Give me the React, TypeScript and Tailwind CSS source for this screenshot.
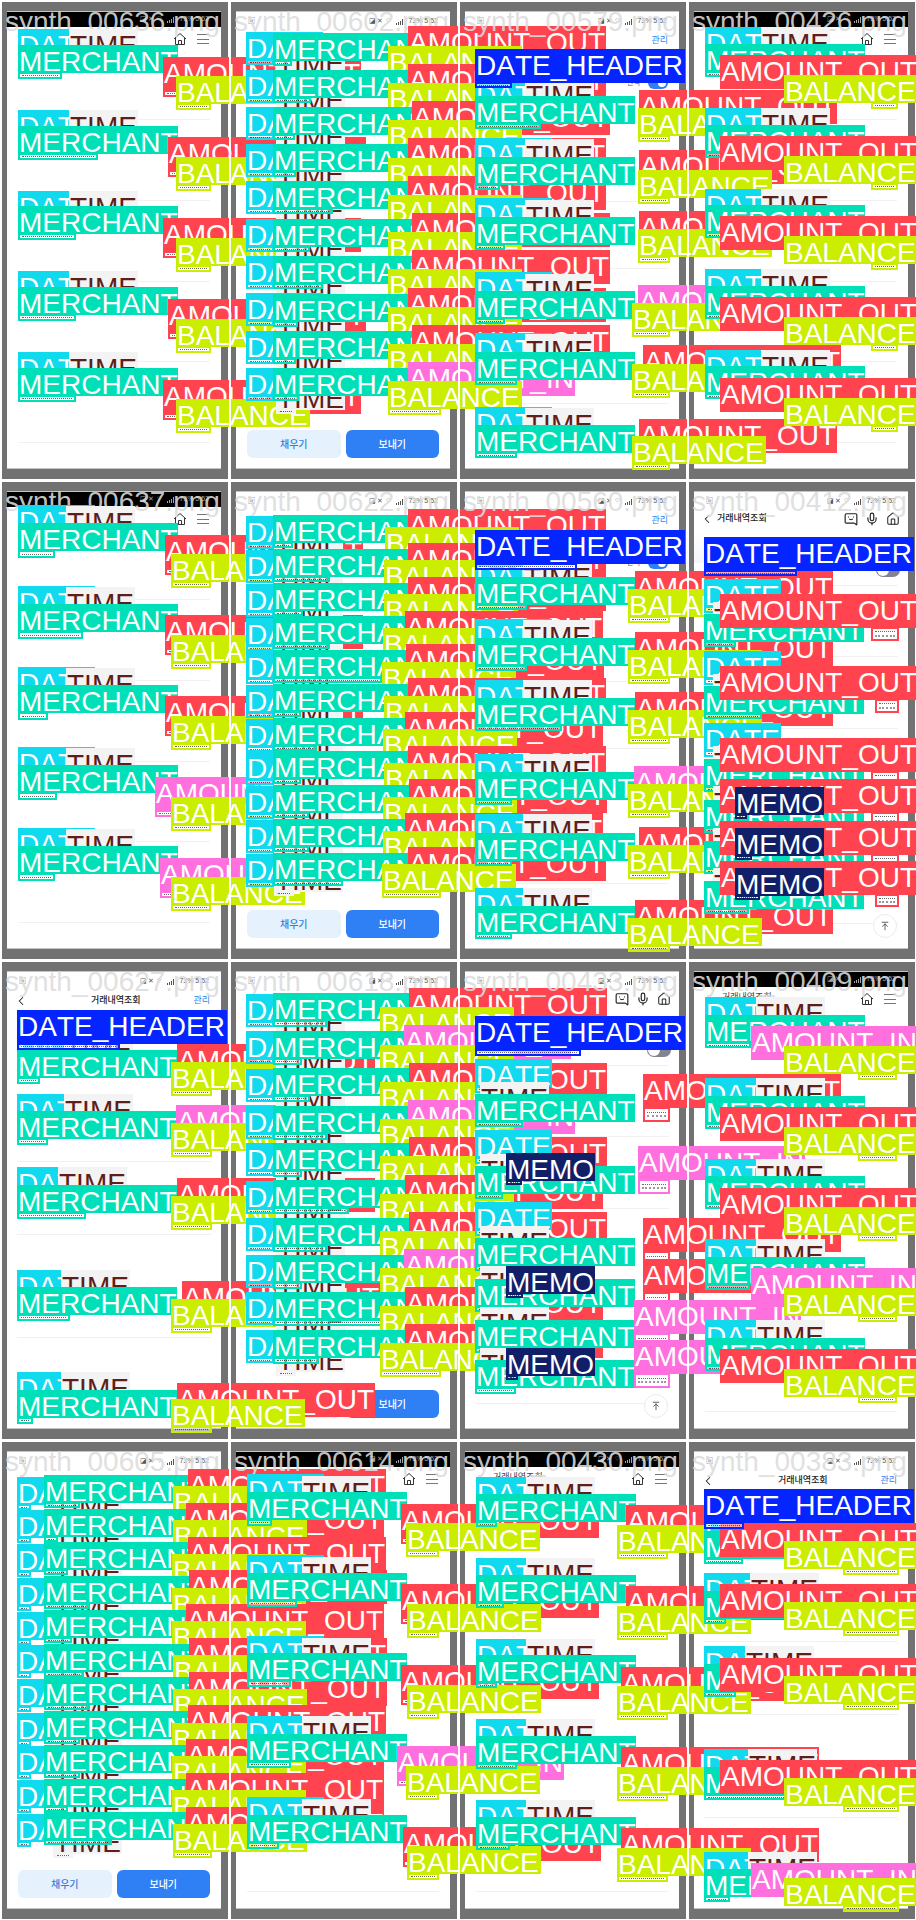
import React from "react";
import { ArrowUpToLine, ChevronLeft, House, Menu, MessageSquare, Mic } from "lucide-react";

type Kind = "D" | "T" | "M" | "O" | "I" | "B" | "E" | "H";

/** kind, label left, label top, then the outlined region: left, width, depth under the label */
type Mark = [Kind, number, number, number?, number?, number?];

const LABELS: Record<Kind, { text: string; tag: string; line: string }> = {
  D: { text: "DATE", tag: "w-[77px] h-7 bg-[#11d9ee] text-white", line: "border-[#11d9ee]" },
  T: { text: "TIME", tag: "w-[69px] h-7 bg-[#f3f3f3] text-[#5e1f1a]", line: "border-[#f3f3f3]" },
  M: { text: "MERCHANT", tag: "w-40 h-7 bg-[#00e0b8] text-white", line: "border-[#00e0b8]" },
  O: { text: "AMOUNT_OUT", tag: "w-[198px] h-[34px] bg-[#ff444f] text-white", line: "border-[#ff444f]" },
  I: { text: "AMOUNT_IN", tag: "w-[167px] h-[34px] bg-[#ff6fdd] text-white", line: "border-[#ff6fdd]" },
  B: { text: "BALANCE", tag: "w-[134px] h-7 bg-[#cbed00] text-white", line: "border-[#cbed00]" },
  E: { text: "MEMO", tag: "w-[89px] h-7 bg-[#111f68] text-white", line: "border-[#111f68]" },
  H: { text: "DATE_HEADER", tag: "w-[210px] h-[34px] bg-[#0425ff] text-white", line: "border-[#0425ff]" },
};

const TALL: Kind[] = ["O", "I", "H"];

/** A transaction row: date y, time y, merchant y + region width, amount kind/x/y, balance x/y */
type Row = [number, number, number, number, Kind, number, number, number, number];

interface RowFrame {
  date: number;
  time: number;
  merchant: number;
  right: number;
  dateW?: number;
  amountX?: number;
  depth: number;
}

function rows(f: RowFrame, list: Row[]): Mark[] {
  return list.flatMap(([dy, ty, my, mw, kind, ax, ay, bx, by]): Mark[] => {
    const balanceX = f.amountX ?? bx;
    const inset = f.merchant === 18 && f.amountX === undefined;
    return [
      ["D", f.date, dy, f.date, f.dateW ?? 28, 5],
      ["T", f.time, ty, f.time, 20, 4],
      ["M", f.merchant, my, f.merchant, mw, f.depth],
      inset && by - ay < 24 ? [kind, ax, ay, ax, f.right - ax, 6] : [kind, ax, ay],
      ["B", bx, by, balanceX, f.right - balanceX, 6],
    ];
  });
}

type ScreenKind = "menu" | "transfer" | "manage" | "search";

interface Sheet {
  name: string;
  screen: ScreenKind;
  title?: boolean;
  late?: boolean;
  marks: Mark[];
}

const sheets: Sheet[] = [
  {
    name: "synth_00636.png",
    screen: "menu",
    marks: rows({ date: 18, time: 69, merchant: 18, right: 211, depth: 6 }, [
      [29, 29, 45, 44, "O", 163, 57, 176, 76],
      [110, 110, 126, 80, "O", 168, 137, 176, 157],
      [191, 191, 206, 58, "O", 163, 218, 176, 238],
      [271, 271, 287, 58, "O", 168, 299, 176, 319],
      [352, 352, 368, 58, "O", 163, 380, 176, 399],
    ]),
  },
  {
    name: "synth_00602.png",
    screen: "transfer",
    marks: rows({ date: 17, time: 47, merchant: 44, right: 212, depth: 5 }, [
      [32, 47, 33, 19, "O", 179, 26, 159, 46],
      [70, 84, 70, 38, "O", 179, 64, 159, 83],
      [107, 121, 107, 22, "O", 183, 101, 159, 120],
      [144, 158, 144, 23, "O", 179, 138, 159, 158],
      [181, 195, 181, 60, "O", 179, 176, 159, 195],
      [219, 233, 219, 37, "O", 183, 213, 159, 232],
      [256, 270, 256, 50, "O", 183, 250, 159, 269],
      [293, 308, 294, 25, "O", 179, 288, 159, 307],
      [331, 345, 331, 23, "O", 183, 325, 159, 344],
      [368, 382, 368, 26, "I", 179, 362, 159, 381],
    ]),
  },
  {
    name: "synth_00579.png",
    screen: "manage",
    marks: [
      ...rows({ date: 17, time: 67, merchant: 17, right: 212, dateW: 77, depth: 5 }, [
        [79, 79, 96, 66, "O", 181, 90, 180, 108],
        [138, 139, 157, 25, "O", 181, 150, 180, 170],
        [198, 200, 217, 30, "O", 181, 211, 180, 229],
        [272, 274, 291, 30, "I", 180, 285, 174, 303],
        [333, 334, 352, 42, "O", 185, 345, 174, 364],
        [407, 408, 425, 42, "O", 181, 419, 174, 436],
      ]),
      ["H", 17, 49, 17, 37, 5],
    ],
  },
  {
    name: "synth_00426.png",
    screen: "menu",
    marks: rows({ date: 18, time: 74, merchant: 18, right: 211, amountX: 184, depth: 5 }, [
      [27, 27, 44, 44, "O", 33, 55, 97, 75],
      [108, 108, 125, 44, "O", 33, 136, 97, 156],
      [189, 189, 205, 44, "O", 33, 216, 97, 236],
      [269, 269, 286, 44, "O", 33, 297, 97, 317],
      [350, 350, 366, 44, "O", 33, 378, 97, 398],
    ]),
  },
  {
    name: "synth_00637.png",
    screen: "menu",
    marks: rows({ date: 18, time: 66, merchant: 18, right: 211, dateW: 77, depth: 7 }, [
      [25, 26, 43, 37, "O", 165, 55, 171, 74],
      [106, 107, 124, 65, "O", 165, 135, 171, 155],
      [187, 188, 205, 30, "O", 165, 216, 171, 236],
      [267, 268, 285, 39, "I", 155, 297, 171, 317],
      [348, 349, 366, 37, "I", 160, 378, 171, 397],
    ]),
  },
  {
    name: "synth_00622.png",
    screen: "transfer",
    marks: rows({ date: 17, time: 45, merchant: 44, right: 212, depth: 5 }, [
      [36, 46, 35, 20, "O", 179, 29, 156, 47],
      [70, 80, 69, 57, "O", 179, 63, 155, 80],
      [104, 114, 103, 30, "O", 179, 97, 155, 114],
      [138, 147, 136, 57, "O", 176, 131, 154, 148],
      [171, 181, 170, 109, "O", 177, 164, 153, 182],
      [205, 215, 204, 28, "O", 179, 198, 155, 216],
      [239, 249, 238, 44, "O", 176, 232, 154, 249],
      [272, 282, 271, 28, "O", 179, 266, 155, 283],
      [306, 316, 305, 36, "O", 180, 299, 154, 317],
      [340, 350, 339, 36, "O", 176, 333, 154, 351],
      [374, 384, 373, 70, "O", 179, 367, 153, 384],
    ]),
  },
  {
    name: "synth_00560.png",
    screen: "manage",
    marks: [
      ...rows({ date: 17, time: 65, merchant: 17, right: 212, depth: 5 }, [
        [80, 81, 97, 52, "O", 177, 91, 170, 109],
        [139, 140, 158, 52, "O", 177, 152, 170, 170],
        [200, 200, 218, 87, "O", 177, 212, 170, 230],
        [274, 274, 292, 37, "I", 176, 286, 170, 304],
        [334, 334, 353, 37, "O", 181, 347, 170, 365],
        [408, 408, 426, 37, "O", 177, 420, 170, 438],
      ]),
      ["H", 17, 50, 17, 102, 6],
    ],
  },
  {
    name: "synth_00412.png",
    screen: "search",
    title: true,
    marks: [
      ["D", 17, 99, 17, 12, 6],
      ["T", 26, 122],
      ["M", 17, 134, 17, 32, 5],
      ["O", 33, 114, 184, 28, 13],
      ["D", 17, 171, 17, 12, 6],
      ["T", 26, 194],
      ["M", 17, 206, 17, 58, 5],
      ["O", 33, 186, 188, 24, 13],
      ["D", 17, 243, 17, 12, 6],
      ["T", 26, 266],
      ["M", 17, 279, 17, 16, 5],
      ["O", 33, 258, 184, 28, 13],
      ["T", 26, 306],
      ["M", 17, 320, 17, 16, 5],
      ["O", 33, 299, 184, 28, 13],
      ["E", 48, 307, 48, 12, 4],
      ["T", 26, 348],
      ["M", 17, 361, 17, 16, 5],
      ["O", 33, 341, 184, 28, 13],
      ["E", 48, 348, 48, 17, 4],
      ["T", 26, 388],
      ["M", 17, 401, 17, 45, 5],
      ["O", 33, 381, 188, 24, 12],
      ["E", 48, 388, 48, 25, 4],
      ["H", 17, 57, 17, 93, 5],
    ],
  },
  {
    name: "synth_00627.png",
    screen: "manage",
    title: true,
    marks: [
      ...rows({ date: 17, time: 64, merchant: 17, right: 212, depth: 6 }, [
        [73, 73, 90, 23, "O", 177, 84, 171, 102],
        [134, 134, 151, 31, "I", 176, 145, 171, 163],
      ]),
      ...rows({ date: 17, time: 58, merchant: 17, right: 212, depth: 6 }, [
        [207, 207, 225, 69, "O", 177, 218, 171, 236],
      ]),
      ...rows({ date: 17, time: 61, merchant: 17, right: 212, depth: 6 }, [
        [310, 310, 327, 53, "O", 182, 321, 171, 339],
        [412, 412, 430, 16, "O", 177, 423, 171, 439],
      ]),
      ["H", 17, 50, 17, 103, 6],
    ],
  },
  {
    name: "synth_00618.png",
    screen: "transfer",
    marks: rows({ date: 17, time: 47, merchant: 44, right: 212, depth: 6 }, [
      [34, 47, 33, 54, "O", 180, 28, 151, 47],
      [71, 85, 71, 29, "I", 175, 65, 151, 85],
      [109, 122, 108, 37, "O", 180, 103, 151, 122],
      [146, 160, 146, 54, "I", 179, 140, 151, 159],
      [183, 197, 183, 29, "O", 180, 177, 151, 196],
      [221, 234, 220, 76, "O", 176, 215, 151, 234],
      [258, 272, 258, 54, "O", 180, 252, 151, 271],
      [295, 309, 295, 29, "I", 175, 289, 151, 308],
      [332, 346, 332, 110, "O", 176, 327, 151, 346],
      [370, 384, 370, 46, "O", 176, 364, 151, 383],
    ]),
  },
  {
    name: "synth_00433.png",
    screen: "search",
    marks: [
      ["D", 17, 99, 17, 12, 6],
      ["T", 22, 122],
      ["M", 17, 134, 17, 48, 5],
      ["O", 185, 114, 185, 27, 14],
      ["D", 17, 170, 17, 12, 6],
      ["T", 22, 194],
      ["M", 17, 206, 17, 28, 5],
      ["I", 180, 186, 180, 32, 14],
      ["E", 48, 193, 48, 16, 4],
      ["D", 17, 242, 17, 12, 6],
      ["T", 22, 266],
      ["M", 17, 278, 17, 28, 5],
      ["O", 185, 258, 185, 27, 14],
      ["T", 22, 306],
      ["M", 17, 319, 17, 16, 5],
      ["O", 185, 299, 185, 27, 14],
      ["E", 48, 306, 48, 17, 4],
      ["T", 22, 347],
      ["M", 17, 360, 17, 16, 5],
      ["I", 176, 340, 176, 36, 14],
      ["T", 22, 388],
      ["M", 17, 400, 17, 41, 6],
      ["I", 176, 380, 176, 36, 14],
      ["E", 48, 388, 48, 12, 4],
      ["H", 17, 56, 17, 106, 6],
    ],
  },
  {
    name: "synth_00409.png",
    screen: "menu",
    title: true,
    late: true,
    marks: rows({ date: 18, time: 69, merchant: 18, right: 210, amountX: 171, depth: 5 }, [
      [37, 37, 55, 46, "I", 64, 66, 97, 86],
      [118, 118, 136, 34, "O", 33, 147, 97, 167],
      [199, 199, 216, 18, "O", 33, 228, 97, 247],
      [279, 279, 297, 45, "I", 64, 308, 97, 328],
      [360, 360, 378, 20, "O", 33, 389, 97, 409],
    ]),
  },
  {
    name: "synth_00605.png",
    screen: "transfer",
    marks: rows({ date: 17, time: 53, merchant: 44, right: 212, dateW: 14, depth: 5 }, [
      [37, 49, 35, 36, "O", 188, 29, 173, 46],
      [70, 83, 69, 14, "O", 186, 63, 173, 80],
      [104, 116, 102, 24, "O", 188, 97, 172, 114],
      [138, 150, 136, 46, "O", 189, 130, 172, 148],
      [172, 184, 170, 28, "O", 186, 164, 172, 181],
      [205, 218, 204, 40, "O", 189, 198, 173, 215],
      [239, 251, 237, 46, "O", 189, 232, 173, 249],
      [273, 285, 271, 36, "O", 188, 265, 172, 283],
      [306, 319, 305, 36, "O", 186, 299, 172, 316],
      [340, 353, 339, 24, "O", 186, 333, 172, 350],
      [374, 386, 372, 68, "O", 186, 367, 173, 384],
    ]),
  },
  {
    name: "synth_00614.png",
    screen: "menu",
    late: true,
    marks: rows({ date: 18, time: 73, merchant: 18, right: 210, dateW: 77, depth: 6 }, [
      [34, 36, 52, 25, "O", 172, 64, 177, 83],
      [115, 117, 133, 50, "O", 172, 144, 178, 164],
      [196, 198, 213, 44, "O", 172, 225, 178, 245],
      [276, 276, 294, 44, "I", 168, 306, 177, 326],
      [357, 359, 375, 32, "O", 174, 387, 178, 406],
    ]),
  },
  {
    name: "synth_00430.png",
    screen: "menu",
    title: true,
    late: true,
    marks: rows({ date: 18, time: 68, merchant: 18, right: 210, depth: 5 }, [
      [37, 37, 54, 21, "O", 168, 65, 159, 85],
      [118, 118, 135, 28, "O", 168, 146, 159, 166],
      [199, 199, 215, 21, "O", 163, 227, 159, 246],
      [279, 279, 296, 41, "O", 163, 307, 159, 327],
      [360, 360, 377, 34, "O", 163, 388, 159, 408],
    ]),
  },
  {
    name: "synth_00383.png",
    screen: "manage",
    title: true,
    marks: [
      ...rows({ date: 17, time: 63, merchant: 17, right: 212, amountX: 156, depth: 5 }, [
        [74, 74, 91, 39, "O", 33, 83, 97, 101],
        [133, 133, 151, 22, "O", 33, 144, 97, 162],
      ]),
      ...rows({ date: 17, time: 58, merchant: 17, right: 212, amountX: 156, depth: 5 }, [
        [206, 206, 224, 32, "O", 33, 218, 97, 236],
      ]),
      ...rows({ date: 17, time: 61, merchant: 17, right: 212, amountX: 156, depth: 5 }, [
        [309, 309, 327, 100, "O", 33, 320, 97, 338],
        [412, 412, 429, 26, "I", 64, 423, 97, 438],
      ]),
      ["H", 17, 49, 17, 40, 6],
    ],
  },
];

function StatusBar({ dark }: { dark: boolean }) {
  return (
    <div
      className={
        dark
          ? "flex h-[15px] shrink-0 items-center justify-end gap-1 bg-black px-3 text-[7px] text-[#a5a5a5]"
          : "flex h-[15px] shrink-0 items-center gap-1 bg-white px-3 pt-1 text-[7px] text-[#555]"
      }
    >
      {!dark && <span className="mr-auto">▣</span>}
      <span>◪ ✕ ⌔</span>
      <svg viewBox="0 0 8 6" className="h-1.5 w-2 fill-current" aria-hidden="true">
        <path d="M0 4h1v2H0zM2 3h1v3H2zM4 2h1v4H4zM6 0h1v6H6z" />
      </svg>
      <span>73% 5:52</span>
    </div>
  );
}

function Dividers({ first, gaps }: { first: string; gaps: string[] }) {
  return (
    <div className={first}>
      {gaps.map((g, i) => (
        <div key={i} className={g} />
      ))}
    </div>
  );
}

const DIV = "border-t border-[#f1f1f1] ";

function MenuScreen({ title, late }: { title?: boolean; late?: boolean }) {
  return (
    <>
      <StatusBar dark />
      <header className="flex h-6 items-center gap-2.5 pr-3 pl-7">
        {title && <h2 className="mb-1 text-[9px] leading-3 text-[#444]">거래내역조회</h2>}
        <button aria-label="홈" className="ml-auto">
          <svg viewBox="0 0 14 14" className="size-[14px] fill-none stroke-[#333] stroke-1" aria-hidden="true">
            <path d="M1 7 7 1.500 13 7M2.500 6v6.500h9V6M5.500 12.500V8.500h3v4" />
          </svg>
        </button>
        <button aria-label="메뉴">
          <svg viewBox="0 0 12 12" className="size-3 fill-none stroke-[#777] stroke-1" aria-hidden="true">
            <path d="M0 1.500h12M0 6.500h12M0 10.500h12" />
          </svg>
        </button>
      </header>
      <Dividers
        first={late ? "px-[11px] pt-[400px]" : "px-[11px] pt-[68px]"}
        gaps={late ? [DIV] : [DIV + "h-[81px]", DIV + "h-[81px]", DIV + "h-20", DIV + "h-[81px]", DIV]}
      />
    </>
  );
}

function TransferScreen() {
  return (
    <>
      <StatusBar dark={false} />
      <div className="mt-auto mb-[10px] flex gap-[5px] px-[11px]">
        <button className="h-7 flex-1 rounded-md bg-[#e6f1fe] text-[10px] font-medium text-[#2f7be0]">채우기</button>
        <button className="h-7 flex-1 rounded-md bg-[#2f80f5] text-[10px] font-medium text-white">보내기</button>
      </div>
    </>
  );
}

function ManageScreen({ title }: { title?: boolean }) {
  return (
    <>
      <StatusBar dark={false} />
      <header className="flex h-7 items-center justify-between px-[11px]">
        <button aria-label="뒤로" className={title ? "-ml-1 w-6" : "invisible"}>
          <ChevronLeft className="size-3.5 text-[#222]" strokeWidth={1.75} />
        </button>
        {title && <h2 className="text-[9px] font-medium text-[#222]">거래내역조회</h2>}
        <a href="#manage" className="text-[9px] text-[#2f80f5]">
          관리
        </a>
      </header>
      <div className="flex items-center justify-end gap-2 px-[11px] pt-[22px]">
        <span className="text-[7px] leading-3 text-[#555]">잔액</span>
        {!title && (
          <span className="flex h-3 w-5 justify-end rounded-full bg-[#2f80f5] p-0.5">
            <span className="size-2 rounded-full bg-white" />
          </span>
        )}
      </div>
      <Dividers
        first="px-[10px] pt-[112px]"
        gaps={title ? [DIV + "h-[73px]", DIV + "h-[103px]", DIV] : [DIV + "h-[67px]", DIV + "h-[135px]", DIV]}
      />
    </>
  );
}

function SearchScreen({ title }: { title?: boolean }) {
  return (
    <>
      <StatusBar dark={false} />
      <header className="flex h-6 items-center gap-[7px] pr-2 pl-[10px] text-[#222]">
        {title && <ChevronLeft className="-mr-1 -ml-1 size-3.5" strokeWidth={1.75} />}
        {title && <h2 className="text-[9px] font-medium">거래내역조회</h2>}
        <button aria-label="상담" className="relative ml-auto">
          <MessageSquare className="size-[14px] -scale-x-100" strokeWidth={2} />
          <svg viewBox="0 0 14 14" className="absolute inset-0 size-[14px] fill-none stroke-[#222]" aria-hidden="true">
            <path d="M4.500 4.500v1M9.500 4.500v1M5 7q2 1.500 4 0" />
          </svg>
        </button>
        <button aria-label="음성">
          <Mic className="size-[14px]" strokeWidth={2} />
        </button>
        <button aria-label="홈">
          <House className="size-[14px]" strokeWidth={1.75} />
        </button>
      </header>
      <div className="h-8 bg-linear-to-b from-white to-[#f4f6fc]" />
      <div className="flex justify-end px-2">
        <span className="flex h-3.5 w-6 rounded-full bg-[#82858f] p-px">
          <span className="size-3 rounded-full bg-white" />
        </span>
      </div>
      <Dividers
        first="px-[10px] pt-2"
        gaps={[DIV + "h-[71px]", DIV + "h-[72px]", DIV + "h-[94px]", DIV + "h-[101px]", DIV]}
      />
      <button
        aria-label="맨 위로"
        className="-mt-2.5 mr-[11px] ml-auto flex size-6 items-center justify-center rounded-full border border-[#ececec] bg-white text-[#444]"
      >
        <ArrowUpToLine className="size-2.5" strokeWidth={2} />
      </button>
    </>
  );
}

function Screen({ sheet }: { sheet: Sheet }) {
  return (
    <section className="flex aspect-[229/480] flex-col bg-[#727272] pt-[11px] pr-2 pb-[11px] pl-[7px]">
      <div className="flex flex-1 flex-col overflow-hidden border-y border-[#c4c4c4] bg-white">
        {sheet.screen === "menu" && <MenuScreen title={sheet.title} late={sheet.late} />}
        {sheet.screen === "transfer" && <TransferScreen />}
        {sheet.screen === "manage" && <ManageScreen title={sheet.title} />}
        {sheet.screen === "search" && <SearchScreen title={sheet.title} />}
      </div>
    </section>
  );
}

function Annotation({ mark }: { mark: Mark }) {
  const [kind, x, y, regionX, regionW, depth] = mark;
  const style = LABELS[kind];
  const height = TALL.includes(kind) ? 34 : 28;
  return (
    <>
      {regionW && depth ? (
        <div
          className={"absolute overflow-hidden border-2 " + style.line}
          style={{ left: regionX, top: y + height - 1, width: regionW, height: depth + 1 }}
        >
          <div className="flex h-full flex-col justify-evenly bg-white/50">
            <div className="mx-0.5 border-t border-dotted border-black/60" />
            {depth > 9 && <div className="mx-0.5 border-t-2 border-dotted border-black/40" />}
          </div>
        </div>
      ) : null}
      <div
        className={"absolute pl-px text-[28px] leading-[34px] whitespace-nowrap " + style.tag}
        style={{ left: x, top: y }}
      >
        {style.text}
      </div>
    </>
  );
}

export default function App() {
  return (
    <main className="relative w-full overflow-hidden bg-white font-['Liberation_Sans','Noto_Sans_CJK_KR',sans-serif] [font-kerning:none]">
      <div className="grid grid-cols-4">
        {sheets.map((s) => (
          <Screen key={s.name} sheet={s} />
        ))}
      </div>
      <div className="pointer-events-none absolute inset-0 grid grid-cols-4">
        {sheets.map((s) => (
          <figure key={s.name} className="relative aspect-[229/480] border-t-2 border-r border-b border-l-2 border-white">
            <div className="absolute -top-0.5 -left-0.5">
              <figcaption className="absolute top-[5px] left-[5px] text-[28px] leading-[34px] text-[#dcdcdc]/90">
                {s.name}
              </figcaption>
              {s.marks.map((m, i) => (
                <Annotation key={i} mark={m} />
              ))}
            </div>
          </figure>
        ))}
      </div>
    </main>
  );
}
